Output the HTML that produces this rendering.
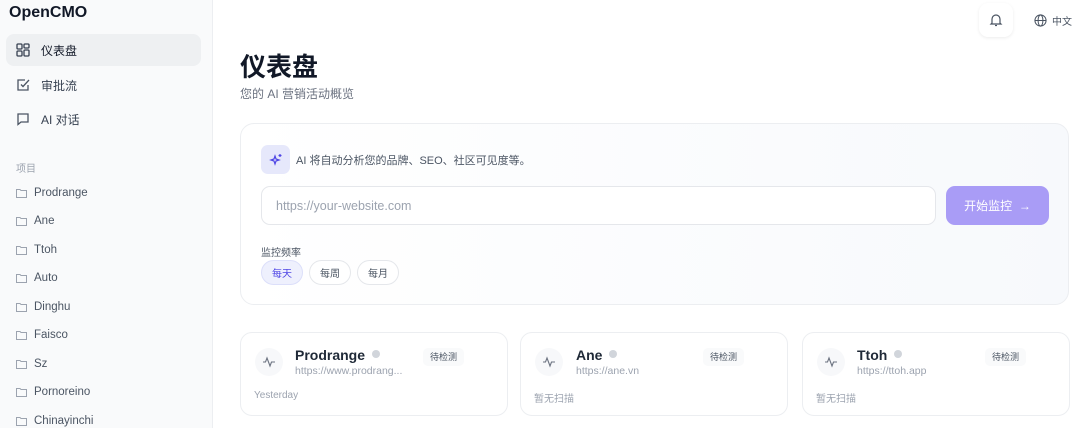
<!DOCTYPE html>
<html><head><meta charset="utf-8"><style>
*{box-sizing:border-box;margin:0;padding:0}
body{width:1080px;height:428px;overflow:hidden;background:#fff;font-family:"Liberation Sans","Noto Sans CJK SC",sans-serif;color:#111827;position:relative}
.sb{position:absolute;left:0;top:0;width:213px;height:428px;background:#f9fafb;border-right:1px solid #eceef1}
.logo{position:absolute;left:9px;top:4px;font-size:16px;font-weight:bold;color:#111827}
.nav{position:absolute;left:6px;width:195px;height:32px;border-radius:8px;display:flex;align-items:center;padding-left:10px;font-size:12px;color:#374151}
.nav svg{margin-right:11px}
.nav.act{background:#eef0f2;color:#111827}
.sec{position:absolute;left:16px;top:160px;font-size:10px;color:#9ca3af}
.proj{position:absolute;left:16px;font-size:11.5px;color:#4b5563;display:flex;align-items:center}
.proj svg{margin-right:7px}
h1{position:absolute;left:240px;top:47px;font-size:26px;font-weight:bold;font-family:"Noto Sans CJK SC",sans-serif}
.sub{position:absolute;left:240px;top:85px;font-size:12px;color:#6b7280}
.bell{position:absolute;left:979px;top:3px;width:34px;height:34px;border-radius:9px;background:#fff;box-shadow:0 1px 3px rgba(0,0,0,.08);display:flex;align-items:center;justify-content:center}
.lang{position:absolute;left:1034px;top:13px;font-size:10px;color:#4b5563;display:flex;align-items:center}
.panel{position:absolute;left:240px;top:123px;width:829px;height:182px;border:1px solid #eceef1;border-radius:14px;background:linear-gradient(90deg,#fff,#f7f9fc)}
.spark{position:absolute;left:20px;top:21px;width:29px;height:29px;border-radius:7px;background:#e6e8fb;display:flex;align-items:center;justify-content:center}
.hint{position:absolute;left:55px;top:28px;font-size:11px;color:#4b5563}
.inp{position:absolute;left:20px;top:62px;width:675px;height:39px;border:1px solid #e5e7eb;border-radius:9px;background:#fff;font-size:12.5px;color:#9ca3af;padding:12px 14px}
.btn{position:absolute;left:705px;top:62px;width:103px;height:39px;border-radius:9px;background:#a99cf6;color:#fff;font-size:12px;display:flex;align-items:center;justify-content:center}
.fl{position:absolute;left:20px;top:120px;font-size:10px;color:#4b5563}
.pill{position:absolute;top:136px;height:25px;border:1px solid #e5e7eb;border-radius:13px;font-size:10px;color:#4b5563;background:#fff;display:flex;align-items:center;justify-content:center;width:42px}
.pill.on{background:#eef0fd;border-color:#dcdffa;color:#4f46e5}
.card{position:absolute;top:332px;width:268px;height:84px;border:1px solid #eceef1;border-radius:12px;background:#fff}
.ic{position:absolute;left:14px;top:15px;width:28px;height:28px;border-radius:50%;background:#f7f8fa;display:flex;align-items:center;justify-content:center}
.nm{position:absolute;left:54px;top:14px;font-size:14px;font-weight:bold;color:#1f2937}
.nm i{display:inline-block;width:8px;height:8px;border-radius:50%;background:#d1d5db;margin-left:7px;vertical-align:2px}
.url{position:absolute;left:54px;top:32px;font-size:10.5px;color:#9ca3af}
.tag{position:absolute;left:182px;top:15px;height:18px;padding:0 7px;font-size:9px;color:#4b5563;background:#f9fafb;border-radius:5px;line-height:18px}
.dt{position:absolute;left:13px;top:57px;font-size:10px;color:#9ca3af}
</style></head><body>
<div class="sb">
<div class="logo">OpenCMO</div>
<div class="nav act" style="top:34px"><svg width="14" height="14" viewBox="0 0 14 14" fill="none" stroke="#374151" stroke-width="1.3"><rect x="1" y="1" width="5" height="5" rx="1"/><rect x="8" y="1" width="5" height="4" rx="1"/><rect x="1" y="8" width="5" height="5" rx="1"/><rect x="8" y="7" width="5" height="6" rx="1"/></svg>仪表盘</div>
<div class="nav" style="top:69px"><svg width="14" height="14" viewBox="0 0 14 14" fill="none" stroke="#4b5563" stroke-width="1.3"><path d="M12 7v5H2V2h7"/><path d="M5 6.5l2 2L13 2"/></svg>审批流</div>
<div class="nav" style="top:103px"><svg width="14" height="14" viewBox="0 0 14 14" fill="none" stroke="#4b5563" stroke-width="1.3"><path d="M2 2h10v8H5l-3 2.5z"/></svg>AI 对话</div>
<div class="sec">项目</div>
<div class="proj" style="top:187px"><svg width="11" height="10" viewBox="0 0 11 10" fill="none" stroke="#9ca3af" stroke-width="1"><path d="M.5 1.5h3.5l1 1h5.5v7H.5z"/></svg>Prodrange</div>
<div class="proj" style="top:215px"><svg width="11" height="10" viewBox="0 0 11 10" fill="none" stroke="#9ca3af" stroke-width="1"><path d="M.5 1.5h3.5l1 1h5.5v7H.5z"/></svg>Ane</div>
<div class="proj" style="top:244px"><svg width="11" height="10" viewBox="0 0 11 10" fill="none" stroke="#9ca3af" stroke-width="1"><path d="M.5 1.5h3.5l1 1h5.5v7H.5z"/></svg>Ttoh</div>
<div class="proj" style="top:272px"><svg width="11" height="10" viewBox="0 0 11 10" fill="none" stroke="#9ca3af" stroke-width="1"><path d="M.5 1.5h3.5l1 1h5.5v7H.5z"/></svg>Auto</div>
<div class="proj" style="top:301px"><svg width="11" height="10" viewBox="0 0 11 10" fill="none" stroke="#9ca3af" stroke-width="1"><path d="M.5 1.5h3.5l1 1h5.5v7H.5z"/></svg>Dinghu</div>
<div class="proj" style="top:329px"><svg width="11" height="10" viewBox="0 0 11 10" fill="none" stroke="#9ca3af" stroke-width="1"><path d="M.5 1.5h3.5l1 1h5.5v7H.5z"/></svg>Faisco</div>
<div class="proj" style="top:358px"><svg width="11" height="10" viewBox="0 0 11 10" fill="none" stroke="#9ca3af" stroke-width="1"><path d="M.5 1.5h3.5l1 1h5.5v7H.5z"/></svg>Sz</div>
<div class="proj" style="top:386px"><svg width="11" height="10" viewBox="0 0 11 10" fill="none" stroke="#9ca3af" stroke-width="1"><path d="M.5 1.5h3.5l1 1h5.5v7H.5z"/></svg>Pornoreino</div>
<div class="proj" style="top:415px"><svg width="11" height="10" viewBox="0 0 11 10" fill="none" stroke="#9ca3af" stroke-width="1"><path d="M.5 1.5h3.5l1 1h5.5v7H.5z"/></svg>Chinayinchi</div>
</div>
<div class="bell"><svg width="14" height="14" viewBox="0 0 14 14" fill="none" stroke="#4b5563" stroke-width="1.2"><path d="M3 10V6a4 4 0 018 0v4l1 1H2z"/><path d="M6 12.5h2"/></svg></div>
<div class="lang"><svg width="13" height="13" viewBox="0 0 14 14" fill="none" stroke="#4b5563" stroke-width="1.1" style="margin-right:5px"><circle cx="7" cy="7" r="6"/><ellipse cx="7" cy="7" rx="2.6" ry="6"/><path d="M1 7h12"/></svg>中文</div>
<h1>仪表盘</h1>
<div class="sub">您的 AI 营销活动概览</div>
<div class="panel">
<div class="spark"><svg width="14" height="14" viewBox="0 0 14 14" fill="none" stroke="#4f46e5" stroke-width="1.2"><path d="M6 3l1 3 3 1-3 1-1 3-1-3-3-1 3-1z"/><path d="M11 1v3M9.5 2.5h3"/></svg></div>
<div class="hint">AI 将自动分析您的品牌、SEO、社区可见度等。</div>
<div class="inp">https://your-website.com</div>
<div class="btn">开始监控 &nbsp;→</div>
<div class="fl">监控频率</div>
<div class="pill on" style="left:20px">每天</div>
<div class="pill" style="left:68px">每周</div>
<div class="pill" style="left:116px">每月</div>
</div>
<div class="card" style="left:240px"><div class="ic"><svg width="12" height="12" viewBox="0 0 12 12" fill="none" stroke="#6b7280" stroke-width="1.1"><path d="M0 6h2.5l1.5-4 3 8 1.5-4H12"/></svg></div><div class="nm">Prodrange<i></i></div><div class="url">https://www.prodrang...</div><div class="tag">待检测</div><div class="dt">Yesterday</div></div>
<div class="card" style="left:520px"><div class="ic"><svg width="12" height="12" viewBox="0 0 12 12" fill="none" stroke="#6b7280" stroke-width="1.1"><path d="M0 6h2.5l1.5-4 3 8 1.5-4H12"/></svg></div><div class="nm" style="left:55px">Ane<i></i></div><div class="url" style="left:55px">https://ane.vn</div><div class="tag">待检测</div><div class="dt">暂无扫描</div></div>
<div class="card" style="left:802px"><div class="ic"><svg width="12" height="12" viewBox="0 0 12 12" fill="none" stroke="#6b7280" stroke-width="1.1"><path d="M0 6h2.5l1.5-4 3 8 1.5-4H12"/></svg></div><div class="nm">Ttoh<i></i></div><div class="url">https://ttoh.app</div><div class="tag">待检测</div><div class="dt">暂无扫描</div></div>
<div class="card" style="left:1084px"></div>
</body></html>
